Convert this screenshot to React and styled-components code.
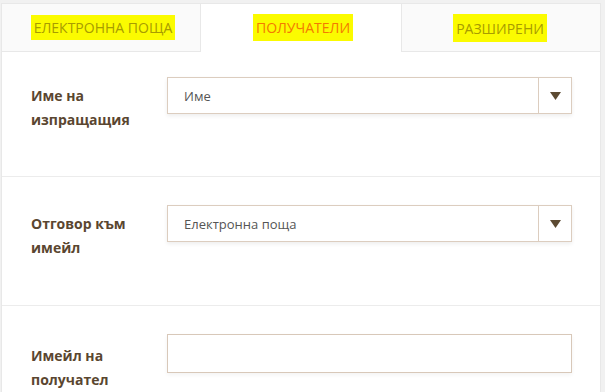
import React from "react"
import styled, { createGlobalStyle } from "styled-components"

const GlobalStyle = createGlobalStyle`
  html, body {
    margin: 0;
    padding: 0;
    background: #f1f1f1;
  }

  body {
    font-family: "Open Sans", "Noto Sans", sans-serif;
  }

  * {
    box-sizing: border-box;
  }
`

const Panel = styled.div`
  width: 600px;
  height: 389px;
  margin: 3px 0 0 1px;
  background: #fff;
  border: 1px solid #e8e8e8;
  border-bottom: none;
  overflow: hidden;
`

const TabBar = styled.div`
  display: grid;
  grid-template-columns: 199px 200px 1fr;
  height: 48px;
`

const Tab = styled.div`
  display: flex;
  align-items: center;
  justify-content: center;
  background: ${props => (props.active ? "#fff" : "#fafafa")};
  border-bottom: 1px solid ${props => (props.active ? "transparent" : "#e8e8e8")};
  border-right: ${props => (props.divider === "right" ? "1px solid #e8e8e8" : "none")};
  border-left: ${props => (props.divider === "left" ? "1px solid #e8e8e8" : "none")};
  font-size: 14px;
  text-transform: uppercase;
  color: ${props => (props.active ? "#f47a00" : "#a89c00")};
`

const Highlight = styled.span`
  display: inline-block;
  background: #fbfb00;
  padding: ${props => props.pad || "3px 3px"};
  line-height: 19px;
  margin-left: ${props => props.shift || 0}px;
`

const Row = styled.div`
  display: grid;
  grid-template-columns: 136px 1fr;
  align-items: start;
  padding: ${props => props.top}px 28px 0 29px;
  height: ${props => props.height}px;
  border-bottom: ${props => (props.last ? "none" : "1px solid #ececec")};
`

const Label = styled.div`
  padding-top: ${props => props.offset}px;
  font-size: 14px;
  font-weight: 700;
  line-height: 24px;
  color: #5a4630;
`

const Select = styled.div`
  display: flex;
  height: 37px;
  border: 1px solid #dccdbf;
  background: #fff;
  box-shadow: 0 2px 4px rgba(0, 0, 0, 0.07);
`

const SelectValue = styled.div`
  flex: 1;
  display: flex;
  align-items: center;
  padding-left: 16px;
  font-size: 13px;
  color: #555;
`

const SelectButton = styled.div`
  width: 33px;
  display: flex;
  align-items: center;
  justify-content: center;
  border-left: 1px solid #dccdbf;
`

const TextInput = styled.input`
  display: block;
  width: 100%;
  height: 39px;
  border: 1px solid #d8c8b9;
  background: #fff;
  box-shadow: 0 2px 4px rgba(0, 0, 0, 0.05);
  outline: none;
`

const Arrow = () => (
  <svg width="11" height="8" viewBox="0 0 11 8">
    <path d="M0 0 H11 L5.5 8 Z" fill="#5c4a32" />
  </svg>
)

const DropDown = ({ value }) => (
  <Select>
    <SelectValue>{value}</SelectValue>
    <SelectButton>
      <Arrow />
    </SelectButton>
  </Select>
)

const App = () => (
  <>
    <GlobalStyle />
    <Panel>
      <TabBar>
        <Tab divider="right">
          <Highlight shift={4}>Електронна поща</Highlight>
        </Tab>
        <Tab active>
          <Highlight pad="4px 3px" shift={4}>Получатели</Highlight>
        </Tab>
        <Tab divider="left">
          <Highlight pad="5px 3px 4px" shift={-2}>Разширени</Highlight>
        </Tab>
      </TabBar>
      <Row top={25} height={125}>
        <Label offset={7}>Име на изпращащия</Label>
        <DropDown value="Име" />
      </Row>
      <Row top={28} height={129}>
        <Label offset={7}>Отговор към имейл</Label>
        <DropDown value="Електронна поща" />
      </Row>
      <Row top={28} height={100} last>
        <Label offset={10}>Имейл на получател</Label>
        <TextInput type="text" />
      </Row>
    </Panel>
  </>
)

export default App
